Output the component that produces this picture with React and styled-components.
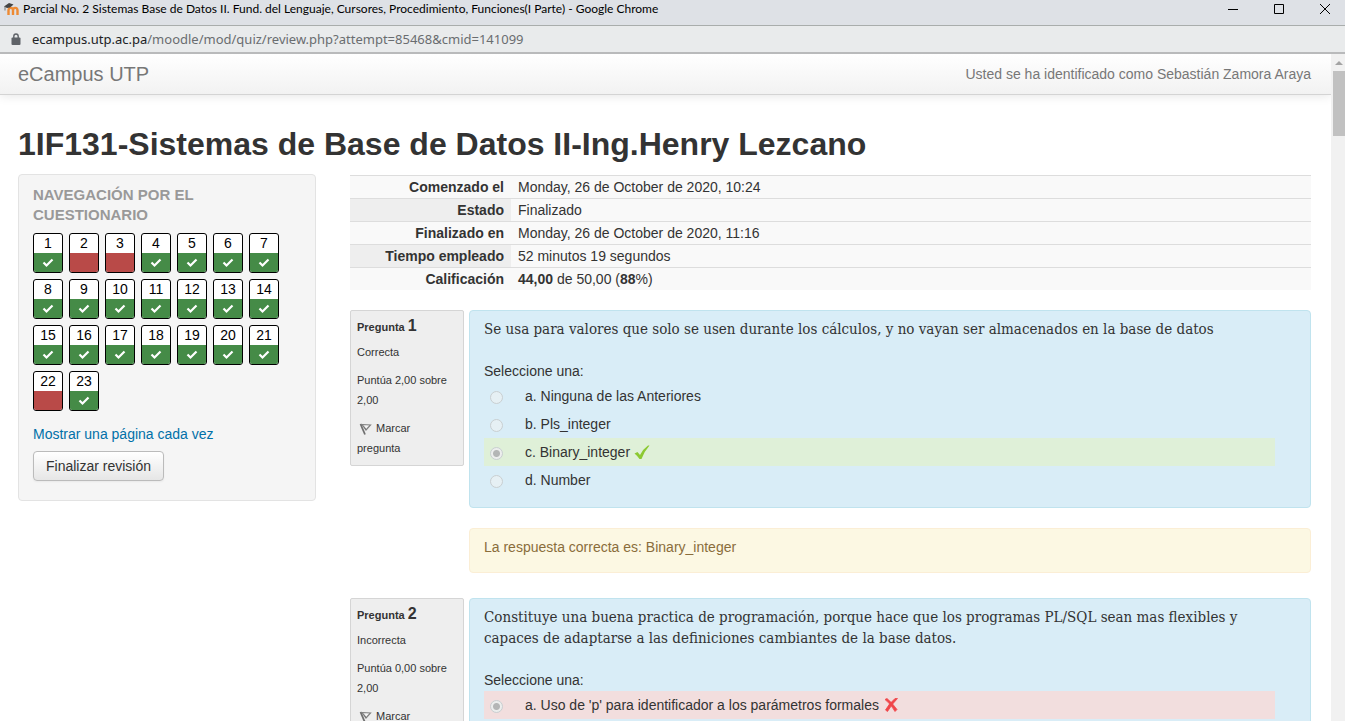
import React from "react";
import styled, { createGlobalStyle } from "styled-components";

const Global = createGlobalStyle`
  *, *::before, *::after { box-sizing: border-box; }
  body {
    margin: 0;
    background: #fff;
    color: #333;
    font: 14px/20px "Liberation Sans", Arial, sans-serif;
  }
`;

const Window = styled.div`
  height: 100vh;
  display: flex;
  flex-direction: column;
  overflow: hidden;
`;

const TitleBar = styled.header`
  flex: none;
  height: 26px;
  padding: 0 14px 7px 4px;
  display: flex;
  align-items: center;
  gap: 4px;
  background: #dee1e6;
  border-bottom: 1px solid #a9adac;
  color: #000;
  font: 12px/18px Lato, "Noto Sans", sans-serif;
`;

const WindowTitle = styled.span`
  flex: 1;
  white-space: nowrap;
`;

const WindowButtons = styled.div`
  display: flex;
  gap: 34px;
`;

const WindowButton = styled.button`
  display: block;
  width: 12px;
  height: 12px;
  padding: 0;
  border: 0;
  background: none;
  svg { display: block; }
`;

const AddressBar = styled.div`
  flex: none;
  height: 28px;
  padding: 0 11px;
  display: flex;
  align-items: center;
  gap: 11px;
  background: #e9ebec;
  border-bottom: 2px solid #b9babb;
  color: #6a6d70;
  font: 13px/20px "Noto Sans", sans-serif;
`;

const Domain = styled.span`
  color: #202124;
`;

const Viewport = styled.div`
  flex: 1;
  min-height: 0;
  display: flex;
`;

const Page = styled.div`
  flex: 1;
  min-width: 0;
  overflow: hidden;
`;

const Scrollbar = styled.div`
  flex: none;
  width: 14px;
  padding: 5px 0 0 2px;
  background: #f1f1f1;
  svg { display: block; height: 12px; }
`;

const Thumb = styled.div`
  height: 65px;
  background: #c1c1c1;
`;

const NavBar = styled.nav`
  height: 41px;
  padding: 0 20px 0 18px;
  display: flex;
  align-items: center;
  justify-content: space-between;
  background: linear-gradient(#fff, #f2f2f2);
  border-bottom: 1px solid #d4d4d4;
  box-shadow: 0 1px 10px rgba(0, 0, 0, 0.1);
  color: #777;
`;

const Brand = styled.a`
  color: #777;
  font-size: 20px;
  text-decoration: none;
`;

const Body = styled.main`
  padding: 29px 20px 0 18px;
`;

const Heading = styled.h1`
  margin: 0 0 10px;
  font-size: 32px;
  line-height: 40px;
`;

const Columns = styled.div`
  display: flex;
  align-items: flex-start;
  gap: 34px;
`;

const QuizNav = styled.aside`
  flex: 0 0 298px;
  padding: 10px 14px 19px;
  background: #f5f5f5;
  border: 1px solid #e3e3e3;
  border-radius: 4px;
`;

const NavTitle = styled.h2`
  margin: 0 0 8px;
  color: #999;
  font-size: 15px;
  line-height: 20px;
  text-transform: uppercase;
`;

const Tiles = styled.div`
  display: flex;
  flex-wrap: wrap;
  gap: 6px;
`;

const Tile = styled.a`
  width: 30px;
  height: 40px;
  border: 1px solid #000;
  border-radius: 3px;
  overflow: hidden;
  display: flex;
  flex-direction: column;
  background: #fff;
  color: #000;
  text-align: center;
  line-height: 19px;
  text-decoration: none;
`;

const TileState = styled.span`
  flex: 1;
  display: flex;
  align-items: center;
  justify-content: center;
  background: ${(p) => (p.$correct ? "#458b47" : "#b94a48")};
`;

const PageLink = styled.a`
  display: block;
  margin: 13px 0 7px;
  color: #0070a8;
  text-decoration: none;
`;

const FinishButton = styled.button`
  padding: 4px 12px;
  border: 1px solid #bbb;
  border-radius: 4px;
  background: linear-gradient(#fff, #e6e6e6);
  box-shadow: 0 1px 2px rgba(0, 0, 0, 0.05);
  color: #333;
  font: inherit;
`;

const Review = styled.section`
  flex: 1;
  min-width: 0;
`;

const Summary = styled.table`
  width: 100%;
  margin: 1px 0 20px;
  border-collapse: separate;
  border-spacing: 0;
  th, td {
    padding: 1px 7px;
    border-top: 1px solid #ddd;
    background: #f9f9f9;
    text-align: left;
  }
  th {
    width: 161px;
    text-align: right;
  }
  tr:nth-child(even) th { background: #eee; }
`;

const Question = styled.article`
  display: flex;
  align-items: flex-start;
  gap: 5px;
  margin-bottom: 25px;
`;

const Info = styled.div`
  flex: 0 0 114px;
  padding: 5px 12px 7px 6px;
  background: #eee;
  border: 1px solid #d5d5d5;
  border-radius: 2px;
  font-size: 11px;
  line-height: 20px;
`;

const InfoTitle = styled.h3`
  margin: 0 0 5px;
  font-size: 11px;
  line-height: 20px;
  span { font-size: 16px; }
`;

const InfoLine = styled.p`
  margin: 0 0 8px;
  &:last-child { margin: 0; }
  svg { margin: -2px 0 -2px 2px; vertical-align: middle; }
`;

const Content = styled.div`
  flex: 1;
  min-width: 0;
`;

const Formulation = styled.div`
  padding: 8px 35px 13px 14px;
  background: #d9edf7;
  border: 1px solid #c0e3ee;
  border-radius: 4px;
`;

const Statement = styled.p`
  margin: 0 0 21px;
  font: 15px/21px "DejaVu Serif Condensed", "DejaVu Serif", serif;
`;

const Answers = styled.fieldset`
  margin: 0;
  padding: 0;
  border: 0;
  legend { padding: 0; line-height: 21px; }
`;

const Answer = styled.label`
  display: flex;
  align-items: center;
  height: 28px;
  padding-left: 6px;
  background: ${(p) => ({ right: "#dff0d8", wrong: "#f2dede" })[p.$state] || "transparent"};
  svg { margin-left: 4px; }
`;

const Radio = styled.input`
  appearance: none;
  width: 13px;
  height: 13px;
  margin: 2px 22px 0 0;
  border: 1px solid #c9cfd1;
  border-radius: 50%;
  background: ${(p) => (p.checked ? "radial-gradient(#b4b6b6 3px, #eceeed 4px)" : "#e6f0f4")};
`;

const Outcome = styled.div`
  margin-top: 20px;
  padding: 8px 14px 15px;
  background: #fcf8e3;
  border: 1px solid #fbeed5;
  border-radius: 4px;
  color: #8a6d3b;
`;

const MoodleLogo = () => (
  <svg width="15" height="14" viewBox="0 0 15 14">
    <path d="M4.500 13V8.500c0-3.500 4.500-3.500 4.500 0V13M9 8.500c0-3.500 4.500-3.500 4.500 0V13" fill="none" stroke="#ee8a33" strokeWidth="2.400" />
    <path d="M0 4.500 5 1l4.500 1.500L6 5.500 3 6z" fill="#444" />
    <path d="M1 4.500v4" stroke="#777" strokeWidth="1" />
  </svg>
);

const Lock = () => (
  <svg width="10" height="13" viewBox="0 0 10 13">
    <rect x="0.500" y="4.500" width="9" height="7.500" rx="1" fill="#5f6368" />
    <path d="M2.800 5V3.200a2.200 2.200 0 0 1 4.400 0V5" fill="none" stroke="#5f6368" strokeWidth="1.400" />
  </svg>
);

const TileTick = () => (
  <svg width="12" height="10" viewBox="0 0 12 10">
    <path d="m1.500 4.500 3 3 6-6" fill="none" stroke="#fff" strokeWidth="2.200" />
  </svg>
);

const Flag = () => (
  <svg width="14" height="14" viewBox="0 0 14 14">
    <path d="m3 2.500 8.500.5-4.500 5z" fill="#f4f4f4" stroke="#808080" strokeWidth="1.200" />
    <path d="m1.500 2 4.500 10.500" fill="none" stroke="#707070" strokeWidth="1.800" />
    <path d="m5 4.500 2 3" fill="none" stroke="#777" strokeWidth="1" />
  </svg>
);

const Tick = () => (
  <svg width="16" height="16" viewBox="0 0 16 16">
    <path d="M.5 9.500 3.500 8l2.500 3Q9 5 14 1.500h1.500Q10.500 7 7.500 15H5.500Q3.500 12 .5 9.500z" fill="#8cc932" />
  </svg>
);

const Cross = () => (
  <svg width="16" height="16" viewBox="0 0 16 16">
    <path d="M2 2.500 4 1.500q5 4 10 11L12 14.500Q8 7 2 2.500z" fill="#f0464a" stroke="#f0464a" strokeWidth="0.800" />
    <path d="M12 1.500h2.500Q8.500 7.500 4.500 14.500L2.500 13Q6 6.500 12 1.500z" fill="#f0464a" stroke="#f0464a" strokeWidth="0.800" />
  </svg>
);

const WRONG = [2, 3, 22];
const NUMBERS = Array.from({ length: 23 }, (_, i) => i + 1);

const SUMMARY = [
  ["Comenzado el", "Monday, 26 de October de 2020, 10:24"],
  ["Estado", "Finalizado"],
  ["Finalizado en", "Monday, 26 de October de 2020, 11:16"],
  ["Tiempo empleado", "52 minutos 19 segundos"],
  ["Calificación", <><b>44,00</b> de 50,00 (<b>88</b>%)</>],
];

const QUESTIONS = [
  {
    number: 1,
    state: "Correcta",
    mark: "Puntúa 2,00 sobre 2,00",
    text: "Se usa para valores que solo se usen durante los cálculos, y no vayan ser almacenados en la base de datos",
    answers: [
      { text: "a. Ninguna de las Anteriores" },
      { text: "b. Pls_integer" },
      { text: "c. Binary_integer", state: "right" },
      { text: "d. Number" },
    ],
    outcome: "La respuesta correcta es: Binary_integer",
  },
  {
    number: 2,
    state: "Incorrecta",
    mark: "Puntúa 0,00 sobre 2,00",
    text: "Constituye una buena practica de programación, porque hace que los programas PL/SQL sean mas flexibles y capaces de adaptarse a las definiciones cambiantes de la base datos.",
    answers: [{ text: "a. Uso de 'p' para identificador a los parámetros formales", state: "wrong" }],
  },
];

export default function App() {
  return (
    <Window>
      <Global />
      <TitleBar>
        <MoodleLogo />
        <WindowTitle>
          Parcial No. 2 Sistemas Base de Datos II. Fund. del Lenguaje, Cursores, Procedimiento, Funciones(I Parte) - Google Chrome
        </WindowTitle>
        <WindowButtons>
          <WindowButton aria-label="Minimizar">
            <svg width="12" height="12"><path d="M1 6.500h10" stroke="#000" /></svg>
          </WindowButton>
          <WindowButton aria-label="Maximizar">
            <svg width="12" height="12"><path d="M1.500 1.500h9v9h-9z" fill="none" stroke="#000" /></svg>
          </WindowButton>
          <WindowButton aria-label="Cerrar">
            <svg width="12" height="12"><path d="m1 1 10 10M11 1 1 11" stroke="#000" /></svg>
          </WindowButton>
        </WindowButtons>
      </TitleBar>
      <AddressBar>
        <Lock />
        <span>
          <Domain>ecampus.utp.ac.pa</Domain>/moodle/mod/quiz/review.php?attempt=85468&amp;cmid=141099
        </span>
      </AddressBar>
      <Viewport>
        <Page>
          <NavBar>
            <Brand href="#">eCampus UTP</Brand>
            <span>Usted se ha identificado como Sebastián Zamora Araya</span>
          </NavBar>
          <Body>
            <Heading>1IF131-Sistemas de Base de Datos II-Ing.Henry Lezcano</Heading>
            <Columns>
              <QuizNav>
                <NavTitle>Navegación por el<br />cuestionario</NavTitle>
                <Tiles>
                  {NUMBERS.map((n) => (
                    <Tile key={n} href="#">
                      {n}
                      <TileState $correct={!WRONG.includes(n)}>
                        {!WRONG.includes(n) && <TileTick />}
                      </TileState>
                    </Tile>
                  ))}
                </Tiles>
                <PageLink href="#">Mostrar una página cada vez</PageLink>
                <FinishButton>Finalizar revisión</FinishButton>
              </QuizNav>
              <Review>
                <Summary>
                  <tbody>
                    {SUMMARY.map(([label, value]) => (
                      <tr key={label}>
                        <th scope="row">{label}</th>
                        <td>{value}</td>
                      </tr>
                    ))}
                  </tbody>
                </Summary>
                {QUESTIONS.map((q) => (
                  <Question key={q.number}>
                    <Info>
                      <InfoTitle>Pregunta <span>{q.number}</span></InfoTitle>
                      <InfoLine>{q.state}</InfoLine>
                      <InfoLine>{q.mark}</InfoLine>
                      <InfoLine><Flag /> Marcar pregunta</InfoLine>
                    </Info>
                    <Content>
                      <Formulation>
                        <Statement>{q.text}</Statement>
                        <Answers>
                          <legend>Seleccione una:</legend>
                          {q.answers.map((a) => (
                            <Answer key={a.text} $state={a.state}>
                              <Radio type="radio" name={`q${q.number}`} checked={!!a.state} disabled readOnly />
                              {a.text}
                              {a.state === "right" && <Tick />}
                              {a.state === "wrong" && <Cross />}
                            </Answer>
                          ))}
                        </Answers>
                      </Formulation>
                      {q.outcome && <Outcome>{q.outcome}</Outcome>}
                    </Content>
                  </Question>
                ))}
              </Review>
            </Columns>
          </Body>
        </Page>
        <Scrollbar>
          <svg width="12" viewBox="0 0 12 12"><path d="m2 6 4-4 4 4z" fill="#a3a3a3" /></svg>
          <Thumb />
        </Scrollbar>
      </Viewport>
    </Window>
  );
}
